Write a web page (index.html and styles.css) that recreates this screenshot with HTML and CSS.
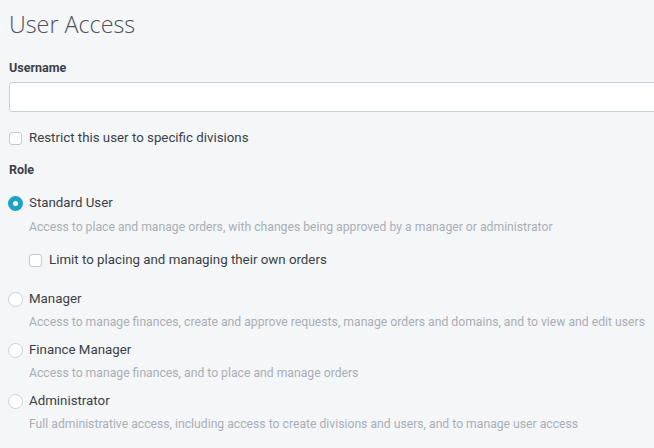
FILE: index.html
```html
<!DOCTYPE html>
<html lang="en">
  <head>
    <meta charset="UTF-8" />
    <title>User Access</title>
    <link rel="stylesheet" href="styles.css">
  </head>
  <body>
    <div class="page">
      <h1>User Access</h1>

      <label class="field-label" for="username">Username</label>
      <input type="text" id="username" class="text-input" />

      <label class="check">
        <span class="box"></span>
        <span>Restrict this user to specific divisions</span>
      </label>

      <div class="field-label role-label">Role</div>

      <div class="role">
        <label class="radio">
          <span class="dot checked"></span>
          <span>Standard User</span>
        </label>
        <p class="desc">Access to place and manage orders, with changes being approved by a manager or administrator</p>
        <label class="check nested">
          <span class="box"></span>
          <span>Limit to placing and managing their own orders</span>
        </label>
      </div>

      <div class="role">
        <label class="radio">
          <span class="dot"></span>
          <span>Manager</span>
        </label>
        <p class="desc">Access to manage finances, create and approve requests, manage orders and domains, and to view and edit users</p>
      </div>

      <div class="role">
        <label class="radio">
          <span class="dot"></span>
          <span>Finance Manager</span>
        </label>
        <p class="desc">Access to manage finances, and to place and manage orders</p>
      </div>

      <div class="role">
        <label class="radio">
          <span class="dot"></span>
          <span>Administrator</span>
        </label>
        <p class="desc">Full administrative access, including access to create divisions and users, and to manage user access</p>
      </div>
    </div>
  </body>
</html>
```

FILE: styles.css
```css
* {
  margin: 0;
  padding: 0;
  box-sizing: border-box;
}

body {
  font-family: Roboto, "Liberation Sans", sans-serif;
  background-color: #f5f6f8;
  color: #3a3f47;
  overflow: hidden;
}

.page {
  padding: 8px 0 0 9px;
  width: 700px;
}

h1 {
  font-family: "Open Sans", sans-serif;
  font-weight: 300;
  font-size: 23.3px;
  line-height: 32px;
  color: #4b5059;
  margin-bottom: 20px;
}

.field-label {
  display: block;
  font-size: 12.5px;
  font-weight: 700;
  color: #3c4149;
  line-height: 16px;
}

.text-input {
  display: block;
  margin-top: 6px;
  width: 700px;
  height: 30px;
  border: 1px solid #c5cfda;
  border-radius: 3px;
  background: #fff;
  outline: none;
}

.check,
.radio {
  display: flex;
  align-items: center;
  font-size: 13.3px;
  line-height: 18px;
}

.check {
  gap: 7px;
  margin-top: 17px;
}

.radio {
  gap: 6px;
  margin-left: -1px;
}

.box {
  width: 13px;
  height: 13px;
  border: 1px solid #c4c9d0;
  border-radius: 3px;
  background: #fff;
}

.role-label {
  margin-top: 15px;
  margin-bottom: 16px;
}

.dot {
  width: 15px;
  height: 15px;
  border: 1px solid #cbd0d7;
  border-radius: 50%;
  background: #fff;
}

.dot.checked {
  border: 5px solid #1ba2c6;
}

.role {
  margin-bottom: 10px;
}

.desc {
  font-size: 12.2px;
  line-height: 17px;
  color: #a9aeb6;
  margin: 6px 0 0 20px;
}

.desc:not(:last-child) {
  margin-top: 7px;
}

.check.nested {
  margin: 15px 0 21px 20px;
}
```
